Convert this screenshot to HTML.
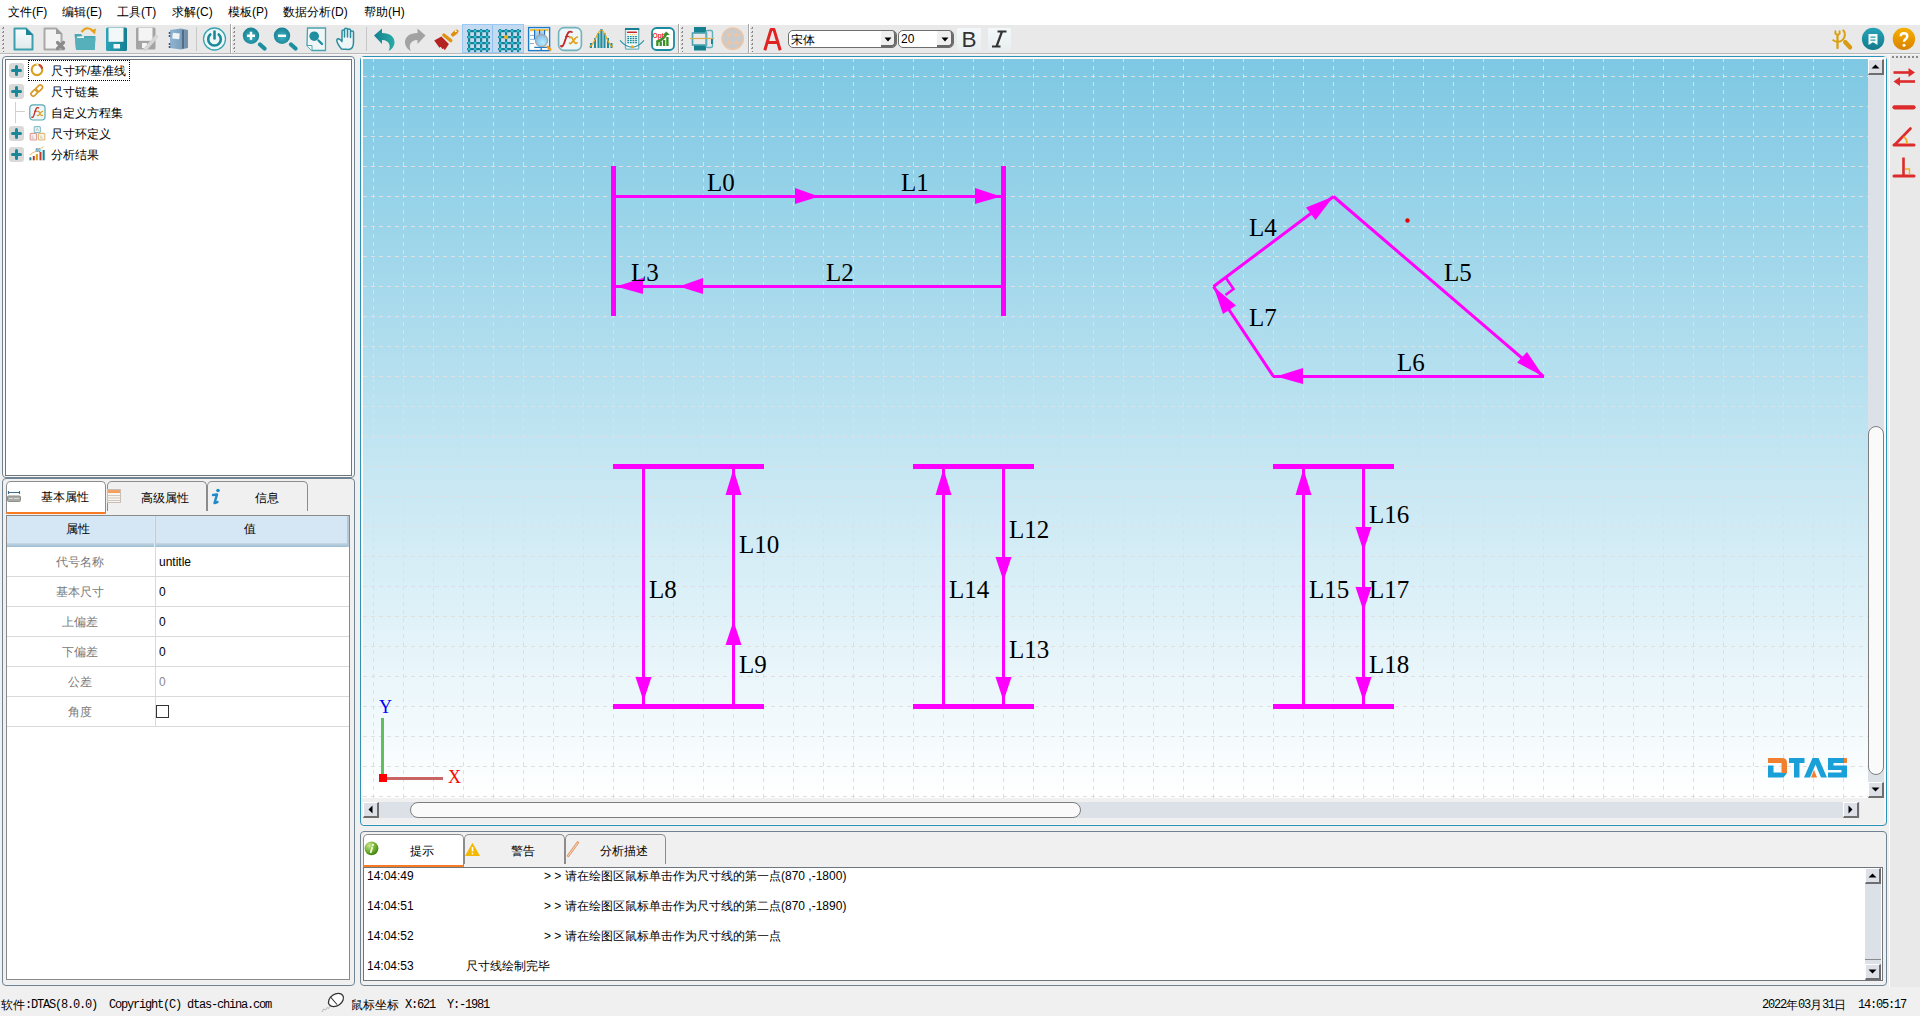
<!DOCTYPE html><html><head><meta charset="utf-8"><style>
html,body{margin:0;padding:0;}
body{width:1920px;height:1016px;position:relative;overflow:hidden;background:#f0f0f0;font-family:"Liberation Sans",sans-serif;font-size:12px;color:#000;}
div{position:absolute;box-sizing:border-box;}
.t{position:absolute;white-space:pre;line-height:14px;font-size:12px;}
.lbl{position:absolute;white-space:nowrap;font-family:"Liberation Serif",serif;font-size:25px;line-height:25px;color:#000;}
</style></head><body>

<div style="left:0px;top:0px;width:1920px;height:25px;background:#ffffff;"></div>
<span class="t" style="left:8px;top:5px;">文件(F)</span>
<span class="t" style="left:62px;top:5px;">编辑(E)</span>
<span class="t" style="left:117px;top:5px;">工具(T)</span>
<span class="t" style="left:172px;top:5px;">求解(C)</span>
<span class="t" style="left:228px;top:5px;">模板(P)</span>
<span class="t" style="left:283px;top:5px;">数据分析(D)</span>
<span class="t" style="left:364px;top:5px;">帮助(H)</span>
<div style="left:0px;top:25px;width:1920px;height:28px;background:#e9e9e9;"></div>
<div style="left:0px;top:53px;width:1920px;height:1px;background:#b9b9b9;"></div>
<div style="left:0px;top:54px;width:1920px;height:1px;background:#f7f7f7;"></div>
<div style="left:2px;top:56px;width:353px;height:422px;border:1px solid #6f8392;border-radius:4px;background:#f8f8f8;"></div>
<div style="left:5px;top:59px;width:347px;height:417px;border:1px solid #70767e;background:#ffffff;"></div>
<div style="left:2px;top:478px;width:353px;height:508px;border:1px solid #6f8392;border-radius:4px;background:#f0f0f0;"></div>
<div style="left:6px;top:515px;width:344px;height:465px;border:1px solid #8a8a8a;background:#ffffff;"></div>
<div style="left:360px;top:56px;width:1527px;height:770px;border:1px solid #2a93b9;border-radius:4px;background:#f0f0f0;"></div>
<div style="left:361px;top:57px;width:1525px;height:2px;background:#fdf8f5;"></div>
<div style="left:361px;top:57px;width:2px;height:741px;background:#fdf8f5;"></div>
<div style="left:1884px;top:57px;width:2px;height:765px;background:#fdf8f5;"></div>
<div style="left:363px;top:824px;width:1519px;height:1px;background:#fbf6f3;"></div>
<div style="left:363px;top:59px;width:1505px;height:739px;background:linear-gradient(to bottom,#7ec8e3 0%,#ffffff 100%);overflow:hidden;"></div>
<div style="left:1889px;top:55px;width:31px;height:932px;background:#e9e9e9;border-left:1px solid #ffffff;"></div>
<svg style="position:absolute;left:1890px;top:55px;" width="30" height="4" viewBox="0 0 30 4"><rect x="2" y="1" width="2" height="2" fill="#8a8a8a"/><rect x="6" y="1" width="2" height="2" fill="#8a8a8a"/><rect x="10" y="1" width="2" height="2" fill="#8a8a8a"/><rect x="14" y="1" width="2" height="2" fill="#8a8a8a"/><rect x="18" y="1" width="2" height="2" fill="#8a8a8a"/><rect x="22" y="1" width="2" height="2" fill="#8a8a8a"/><rect x="26" y="1" width="2" height="2" fill="#8a8a8a"/></svg>
<svg style="position:absolute;left:1890px;top:62px;" width="30" height="26" viewBox="0 0 30 26"><path d="M3.5 10.5 H20" stroke="#dd2a2a" stroke-width="2.6"/><path d="M18.5 6 L25 10.5 L18.5 15 Z" fill="#dd2a2a"/><path d="M9 19.5 H25" stroke="#dd2a2a" stroke-width="2.6"/><path d="M10 15 L3.5 19.5 L10 24 Z" fill="#dd2a2a"/></svg>
<svg style="position:absolute;left:1890px;top:100px;" width="30" height="14" viewBox="0 0 30 14"><path d="M4.5 7.3 H23.5" stroke="#dd2a2a" stroke-width="4.2" stroke-linecap="round"/></svg>
<svg style="position:absolute;left:1890px;top:125px;" width="30" height="24" viewBox="0 0 30 24"><path d="M4 20 H24" stroke="#dd2a2a" stroke-width="3" stroke-linecap="round"/><path d="M5 19.5 L20.5 3.5" stroke="#dd2a2a" stroke-width="2.6" stroke-linecap="round"/><path d="M13.5 12 Q17 13 17 19" fill="none" stroke="#f2a81e" stroke-width="1.8"/></svg>
<svg style="position:absolute;left:1890px;top:155px;" width="30" height="24" viewBox="0 0 30 24"><path d="M13.5 2.5 V20" stroke="#dd2a2a" stroke-width="2.6"/><path d="M4 21 H24" stroke="#dd2a2a" stroke-width="3" stroke-linecap="round"/><path d="M15 14 H19.5 V19.5" fill="none" stroke="#f2b01e" stroke-width="1.4"/></svg>
<div style="left:360px;top:831px;width:1527px;height:155px;border:1px solid #6f8392;border-radius:4px;background:#f0f0f0;"></div>
<div style="left:363px;top:867px;width:1520px;height:114px;border:1px solid #70767e;background:#ffffff;"></div>
<svg style="position:absolute;left:0;top:0" width="1920" height="1016" viewBox="0 0 1920 1016"><clipPath id="cc"><rect x="363" y="59" width="1505" height="739"/></clipPath><g clip-path="url(#cc)"><defs><pattern id="gv" x="0" y="0" width="30" height="8" patternUnits="userSpaceOnUse"><rect x="13" y="2" width="1" height="4" fill="#dfdfdf"/></pattern><pattern id="gh" x="0" y="0" width="8" height="30" patternUnits="userSpaceOnUse"><rect x="3" y="16" width="4" height="1" fill="#dfdfdf"/></pattern></defs><rect x="363" y="59" width="1505" height="739" fill="url(#gv)" shape-rendering="crispEdges"/><rect x="363" y="59" width="1505" height="739" fill="url(#gh)" shape-rendering="crispEdges"/><rect x="611" y="166" width="5" height="150" fill="#ff00ff" shape-rendering="crispEdges"/><rect x="1001" y="166" width="5" height="150" fill="#ff00ff" shape-rendering="crispEdges"/><rect x="615" y="195" width="386" height="3" fill="#ff00ff" shape-rendering="crispEdges"/><rect x="615" y="285" width="386" height="3" fill="#ff00ff" shape-rendering="crispEdges"/><polygon points="795,188 795,204 819,196.5" fill="#ff00ff"/><polygon points="975,188 975,204 1001,196.5" fill="#ff00ff"/><polygon points="703,278 703,294 679,286.5" fill="#ff00ff"/><polygon points="643,278 643,294 616,286.5" fill="#ff00ff"/><text x="707" y="191" font-family="Liberation Serif" font-size="25" fill="#000">L0</text><text x="901" y="191" font-family="Liberation Serif" font-size="25" fill="#000">L1</text><text x="631" y="281" font-family="Liberation Serif" font-size="25" fill="#000">L3</text><text x="826" y="281" font-family="Liberation Serif" font-size="25" fill="#000">L2</text><line x1="1213.5" y1="286.5" x2="1333.5" y2="196.5" stroke="#ff00ff" stroke-width="3"/><line x1="1333.5" y1="196.5" x2="1543.5" y2="376.5" stroke="#ff00ff" stroke-width="3"/><rect x="1273" y="375" width="271" height="3" fill="#ff00ff" shape-rendering="crispEdges"/><line x1="1273.5" y1="376.5" x2="1213.5" y2="286.5" stroke="#ff00ff" stroke-width="3"/><polygon points="1333.5,196.5 1306,207.5 1315.5,220" fill="#ff00ff"/><polygon points="1543.5,376.5 1517,362.5 1527,352" fill="#ff00ff"/><polygon points="1276,376.5 1303,368 1303,384" fill="#ff00ff"/><polygon points="1213.5,286.5 1223,314 1236,305.5" fill="#ff00ff"/><polyline points="1226,278 1233.5,289 1225.5,295" fill="none" stroke="#ff00ff" stroke-width="2.6"/><circle cx="1407.5" cy="220.5" r="2.2" fill="#e80000"/><text x="1249" y="236" font-family="Liberation Serif" font-size="25" fill="#000">L4</text><text x="1444" y="281" font-family="Liberation Serif" font-size="25" fill="#000">L5</text><text x="1249" y="326" font-family="Liberation Serif" font-size="25" fill="#000">L7</text><text x="1397" y="371" font-family="Liberation Serif" font-size="25" fill="#000">L6</text><rect x="613" y="464" width="151" height="5" fill="#ff00ff" shape-rendering="crispEdges"/><rect x="613" y="704" width="151" height="5" fill="#ff00ff" shape-rendering="crispEdges"/><rect x="642" y="469" width="3" height="235" fill="#ff00ff" shape-rendering="crispEdges"/><rect x="732" y="469" width="3" height="235" fill="#ff00ff" shape-rendering="crispEdges"/><rect x="913" y="464" width="121" height="5" fill="#ff00ff" shape-rendering="crispEdges"/><rect x="913" y="704" width="121" height="5" fill="#ff00ff" shape-rendering="crispEdges"/><rect x="942" y="469" width="3" height="235" fill="#ff00ff" shape-rendering="crispEdges"/><rect x="1002" y="469" width="3" height="235" fill="#ff00ff" shape-rendering="crispEdges"/><rect x="1273" y="464" width="121" height="5" fill="#ff00ff" shape-rendering="crispEdges"/><rect x="1273" y="704" width="121" height="5" fill="#ff00ff" shape-rendering="crispEdges"/><rect x="1302" y="469" width="3" height="235" fill="#ff00ff" shape-rendering="crispEdges"/><rect x="1362" y="469" width="3" height="235" fill="#ff00ff" shape-rendering="crispEdges"/><polygon points="635.5,677 651.5,677 643.5,701" fill="#ff00ff"/><polygon points="733.5,469 725.5,495 741.5,495" fill="#ff00ff"/><polygon points="733.5,621 725.5,645 741.5,645" fill="#ff00ff"/><polygon points="943.5,469 935.5,495 951.5,495" fill="#ff00ff"/><polygon points="995.5,557 1011.5,557 1003.5,581" fill="#ff00ff"/><polygon points="995.5,677 1011.5,677 1003.5,701" fill="#ff00ff"/><polygon points="1303.5,469 1295.5,495 1311.5,495" fill="#ff00ff"/><polygon points="1355.5,527 1371.5,527 1363.5,551" fill="#ff00ff"/><polygon points="1355.5,587 1371.5,587 1363.5,611" fill="#ff00ff"/><polygon points="1355.5,677 1371.5,677 1363.5,701" fill="#ff00ff"/><text x="649" y="598" font-family="Liberation Serif" font-size="25" fill="#000">L8</text><text x="739" y="553" font-family="Liberation Serif" font-size="25" fill="#000">L10</text><text x="739" y="673" font-family="Liberation Serif" font-size="25" fill="#000">L9</text><text x="1009" y="538" font-family="Liberation Serif" font-size="25" fill="#000">L12</text><text x="949" y="598" font-family="Liberation Serif" font-size="25" fill="#000">L14</text><text x="1009" y="658" font-family="Liberation Serif" font-size="25" fill="#000">L13</text><text x="1369" y="523" font-family="Liberation Serif" font-size="25" fill="#000">L16</text><text x="1309" y="598" font-family="Liberation Serif" font-size="25" fill="#000">L15</text><text x="1369" y="598" font-family="Liberation Serif" font-size="25" fill="#000">L17</text><text x="1369" y="673" font-family="Liberation Serif" font-size="25" fill="#000">L18</text><rect x="381" y="718" width="3" height="56" fill="#5fbf5f" shape-rendering="crispEdges"/><rect x="387" y="777" width="56" height="3" fill="#c86464" shape-rendering="crispEdges"/><rect x="379" y="774" width="8" height="8" fill="#ff0000" shape-rendering="crispEdges"/><text x="379" y="713" font-family="Liberation Serif" font-size="18" fill="#0000ff">Y</text><text x="448" y="783" font-family="Liberation Serif" font-size="18" fill="#ff0000">X</text></g></svg>
<div style="left:9px;top:63px;width:15px;height:15px;background:#d9d9d9;border-radius:3px;"></div>
<svg style="position:absolute;left:9px;top:63px;" width="15" height="15" viewBox="0 0 15 15"><path d="M7.5 3.5v8M3.5 7.5h8" stroke="#1a8799" stroke-width="3" stroke-linecap="round"/></svg>
<span class="t" style="left:51px;top:64px;">尺寸环/基准线</span>
<div style="left:9px;top:84px;width:15px;height:15px;background:#d9d9d9;border-radius:3px;"></div>
<svg style="position:absolute;left:9px;top:84px;" width="15" height="15" viewBox="0 0 15 15"><path d="M7.5 3.5v8M3.5 7.5h8" stroke="#1a8799" stroke-width="3" stroke-linecap="round"/></svg>
<span class="t" style="left:51px;top:85px;">尺寸链集</span>
<span class="t" style="left:51px;top:106px;">自定义方程集</span>
<div style="left:9px;top:126px;width:15px;height:15px;background:#d9d9d9;border-radius:3px;"></div>
<svg style="position:absolute;left:9px;top:126px;" width="15" height="15" viewBox="0 0 15 15"><path d="M7.5 3.5v8M3.5 7.5h8" stroke="#1a8799" stroke-width="3" stroke-linecap="round"/></svg>
<span class="t" style="left:51px;top:127px;">尺寸环定义</span>
<div style="left:9px;top:147px;width:15px;height:15px;background:#d9d9d9;border-radius:3px;"></div>
<svg style="position:absolute;left:9px;top:147px;" width="15" height="15" viewBox="0 0 15 15"><path d="M7.5 3.5v8M3.5 7.5h8" stroke="#1a8799" stroke-width="3" stroke-linecap="round"/></svg>
<span class="t" style="left:51px;top:148px;">分析结果</span>
<div style="left:15px;top:102px;width:1px;height:21px;background:#d4d0cc;"></div>
<div style="left:16px;top:111px;width:9px;height:1px;background:#d4d0cc;"></div>
<div style="left:28px;top:60px;width:102px;height:21px;border:1px dotted #000;"></div>
<svg style="position:absolute;left:29px;top:62px;" width="17" height="17" viewBox="0 0 17 17"><circle cx="8" cy="7.8" r="5.3" fill="none" stroke="#d9a020" stroke-width="2.1"/><path d="M9.8 2.8 A5.3 5.3 0 0 1 13.2 6.8" fill="none" stroke="#c8463a" stroke-width="2.1"/><path d="M7.6 1.8 L9.2 3.6" stroke="#fff" stroke-width="1.2"/></svg>
<svg style="position:absolute;left:29px;top:83px;" width="17" height="17" viewBox="0 0 17 17"><g fill="none" stroke="#d99a26" stroke-width="1.7"><rect x="1.6" y="7.6" width="7.6" height="4.4" rx="2.2" transform="rotate(-45 5.4 9.8)"/><rect x="6.3" y="3.2" width="7.6" height="4.4" rx="2.2" transform="rotate(-45 10.1 5.4)"/></g></svg>
<svg style="position:absolute;left:29px;top:104px;" width="17" height="17" viewBox="0 0 17 17"><rect x="0.8" y="0.8" width="15.2" height="15.2" rx="3.2" fill="#eef6f6" stroke="#5aa8b4" stroke-width="1.2"/><path d="M2.8 13.2 Q3.8 14 4.8 11.5 L6.8 5.4 Q7.7 3 9.6 3.9" fill="none" stroke="#c0302a" stroke-width="1.3" stroke-linecap="round"/><path d="M5.2 7.2 H8.3" stroke="#c0302a" stroke-width="0.9"/><path d="M8.6 7.6 Q9.5 6.8 10.2 8 L11.8 11 Q12.5 12 13.4 11.2 M13.6 7.3 Q13 7.2 11.5 9 L9.8 11.2 Q9.1 12 8.4 11.5" fill="none" stroke="#d9a020" stroke-width="1.2" stroke-linecap="round"/></svg>
<svg style="position:absolute;left:29px;top:125px;" width="17" height="17" viewBox="0 0 17 17"><rect x="5.2" y="1.6" width="6.2" height="6" rx="1" fill="#eaf5f6" stroke="#86c0ca" stroke-width="1.1"/><rect x="1.2" y="8.4" width="6.4" height="6.6" rx="1" fill="#fbeeee" stroke="#dc9a9a" stroke-width="1.1"/><rect x="9.4" y="8.4" width="6.4" height="6.6" rx="1" fill="#fbf3e6" stroke="#e0b878" stroke-width="1.1"/><path d="M7 6 L8.3 3.2 L9.6 6 M3.2 10.3 V13.2 H5 M11.8 10.5 V13.1 H13.6" fill="none" stroke="#b0b8b8" stroke-width="0.7"/></svg>
<svg style="position:absolute;left:29px;top:146px;" width="17" height="16" viewBox="0 0 17 16"><g><rect x="0.4" y="11.3" width="2" height="3" fill="#1a8799"/><rect x="3.8" y="10" width="2" height="4.3" fill="#c23a2e"/><rect x="6.9" y="8" width="2" height="6.3" fill="#d9a020"/><rect x="10.5" y="6" width="2" height="8.3" fill="#c23a2e"/><rect x="13.6" y="4" width="2.1" height="10.3" fill="#1a8799"/></g><path d="M0.8 9 Q4 6 7 5.4" stroke="#e8b450" stroke-width="0.9" fill="none"/><text x="6.5" y="6" font-family="Liberation Sans" font-weight="bold" font-size="4.5" fill="#1a8799">60</text><path d="M11.5 2.6 L14.5 0.8" stroke="#e8b450" stroke-width="0.9"/></svg>
<div style="left:6px;top:481px;width:100px;height:33px;background:#ffffff;border:1px solid #8c8c8c;border-bottom:none;border-radius:5px 5px 0 0;"></div>
<div style="left:6px;top:512px;width:100px;height:2px;background:#f97b21;border-radius:0 0 2px 2px;"></div>
<div style="left:107px;top:481px;width:100px;height:30px;border:1px solid #8c8c8c;border-bottom:none;border-radius:5px 5px 0 0;"></div>
<div style="left:207px;top:481px;width:101px;height:30px;border:1px solid #8c8c8c;border-bottom:none;border-radius:5px 5px 0 0;"></div>
<span class="t" style="left:41px;top:490px;">基本属性</span>
<span class="t" style="left:141px;top:491px;">高级属性</span>
<span class="t" style="left:255px;top:491px;">信息</span>
<svg style="position:absolute;left:7px;top:490px;" width="14" height="12" viewBox="0 0 14 12"><path d="M1.5 1v3M12.5 1v3M1.5 2.5h11" stroke="#3e6f8e" stroke-width="1.2" fill="none"/><rect x="0.5" y="6" width="13" height="5.5" rx="1" fill="#a9aca6" stroke="#8d908a"/><path d="M2 8.5h4M7 8.5h5" stroke="#d6d8d2" stroke-width="1"/></svg>
<svg style="position:absolute;left:107px;top:489px;" width="15" height="15" viewBox="0 0 15 15"><rect x="0.5" y="0.5" width="13" height="13" fill="#f8f4ee" stroke="#c8c0b8"/><rect x="1" y="1" width="12" height="3" fill="#f4a060"/><path d="M1 6.5h12M1 9h12M1 11.5h12" stroke="#d0c8c0" stroke-width="1"/></svg>
<svg style="position:absolute;left:210px;top:488px;" width="11" height="18" viewBox="0 0 11 18"><circle cx="8" cy="2.5" r="1.8" fill="#1f8ac9"/><path d="M3 7 L7 6.5 L4.5 15 L7.5 14" stroke="#1f8ac9" stroke-width="2.4" fill="none" stroke-linecap="round" stroke-linejoin="round"/></svg>
<div style="left:7px;top:516px;width:342px;height:28px;background:#d5e6f4;"></div>
<div style="left:7px;top:543px;width:342px;height:4px;background:linear-gradient(#c6d8e6,#9cbcd0);"></div>
<div style="left:154px;top:516px;width:2px;height:31px;background:linear-gradient(to right,#f4f8fb,#a8c0d0);"></div>
<div style="left:347px;top:516px;width:2px;height:31px;background:#b4c8d8;"></div>
<span class="t" style="left:66px;top:522px;">属性</span>
<span class="t" style="left:244px;top:522px;">值</span>
<div style="left:7px;top:576px;width:342px;height:1px;background:#d9d9d9;"></div>
<div style="left:155px;top:547px;width:1px;height:30px;background:#d9d9d9;"></div>
<span class="t" style="left:56px;top:555px;color:#7a7a7a;">代号名称</span>
<span class="t" style="left:159px;top:555px;color:#000;">untitle</span>
<div style="left:7px;top:606px;width:342px;height:1px;background:#d9d9d9;"></div>
<div style="left:155px;top:577px;width:1px;height:30px;background:#d9d9d9;"></div>
<span class="t" style="left:56px;top:585px;color:#7a7a7a;">基本尺寸</span>
<span class="t" style="left:159px;top:585px;color:#000;">0</span>
<div style="left:7px;top:636px;width:342px;height:1px;background:#d9d9d9;"></div>
<div style="left:155px;top:607px;width:1px;height:30px;background:#d9d9d9;"></div>
<span class="t" style="left:62px;top:615px;color:#7a7a7a;">上偏差</span>
<span class="t" style="left:159px;top:615px;color:#000;">0</span>
<div style="left:7px;top:666px;width:342px;height:1px;background:#d9d9d9;"></div>
<div style="left:155px;top:637px;width:1px;height:30px;background:#d9d9d9;"></div>
<span class="t" style="left:62px;top:645px;color:#7a7a7a;">下偏差</span>
<span class="t" style="left:159px;top:645px;color:#000;">0</span>
<div style="left:7px;top:696px;width:342px;height:1px;background:#d9d9d9;"></div>
<div style="left:155px;top:667px;width:1px;height:30px;background:#d9d9d9;"></div>
<span class="t" style="left:68px;top:675px;color:#7a7a7a;">公差</span>
<span class="t" style="left:159px;top:675px;color:#8a8a8a;">0</span>
<div style="left:7px;top:726px;width:342px;height:1px;background:#d9d9d9;"></div>
<div style="left:155px;top:697px;width:1px;height:30px;background:#d9d9d9;"></div>
<span class="t" style="left:68px;top:705px;color:#7a7a7a;">角度</span>
<div style="left:156px;top:705px;width:13px;height:13px;border:1px solid #333;background:#fff;"></div>
<div style="left:363px;top:834px;width:101px;height:33px;background:#ffffff;border:1px solid #8c8c8c;border-bottom:none;border-radius:5px 5px 0 0;"></div>
<div style="left:363px;top:865px;width:101px;height:2px;background:#f97b21;border-radius:0 0 2px 2px;"></div>
<div style="left:464px;top:834px;width:101px;height:30px;border:1px solid #8c8c8c;border-bottom:none;border-radius:5px 5px 0 0;"></div>
<div style="left:565px;top:834px;width:101px;height:30px;border:1px solid #8c8c8c;border-bottom:none;border-radius:5px 5px 0 0;"></div>
<span class="t" style="left:410px;top:844px;">提示</span>
<span class="t" style="left:511px;top:844px;">警告</span>
<span class="t" style="left:600px;top:844px;">分析描述</span>
<svg style="position:absolute;left:364px;top:841px;" width="16" height="16" viewBox="0 0 16 16"><defs><radialGradient id="gi" cx="0.35" cy="0.3" r="0.75"><stop offset="0" stop-color="#c8e890"/><stop offset="0.6" stop-color="#6fae2a"/><stop offset="1" stop-color="#3f7e14"/></radialGradient></defs><circle cx="7.5" cy="7.3" r="6.9" fill="url(#gi)"/><path d="M8.2 6.5 L6.8 11.2" stroke="#f0f8e0" stroke-width="1.8" stroke-linecap="round"/><circle cx="8.9" cy="3.9" r="1.1" fill="#f0f8e0"/></svg>
<svg style="position:absolute;left:465px;top:842px;" width="16" height="15" viewBox="0 0 16 15"><path d="M7.5 0.8 L15 14 L0 14 Z" fill="#f5b800"/><path d="M7.5 5v4.5" stroke="#fff" stroke-width="1.6"/><circle cx="7.5" cy="11.6" r="0.9" fill="#fff"/></svg>
<svg style="position:absolute;left:566px;top:841px;" width="14" height="18" viewBox="0 0 14 18"><path d="M11.8 1.5 L2.2 14.8" stroke="#e3935c" stroke-width="2.6" stroke-linecap="round"/><path d="M11.8 1.5 L2.2 14.8" stroke="#fbe8d8" stroke-width="0.9"/></svg>
<span class="t" style="left:367px;top:869px;">14:04:49</span>
<span class="t" style="left:544px;top:869px;letter-spacing:0px;">&gt; &gt;</span>
<span class="t" style="left:565px;top:869px;">请在绘图区鼠标单击作为尺寸线的第一点(870 ,-1800)</span>
<span class="t" style="left:367px;top:899px;">14:04:51</span>
<span class="t" style="left:544px;top:899px;letter-spacing:0px;">&gt; &gt;</span>
<span class="t" style="left:565px;top:899px;">请在绘图区鼠标单击作为尺寸线的第二点(870 ,-1890)</span>
<span class="t" style="left:367px;top:929px;">14:04:52</span>
<span class="t" style="left:544px;top:929px;letter-spacing:0px;">&gt; &gt;</span>
<span class="t" style="left:565px;top:929px;">请在绘图区鼠标单击作为尺寸线的第一点</span>
<span class="t" style="left:367px;top:959px;">14:04:53</span>
<span class="t" style="left:466px;top:959px;">尺寸线绘制完毕</span>
<span class="t" style="left:1px;top:998px;font-size:12px;">软件</span>
<span class="t" style="left:25px;top:998px;font-family:'Liberation Mono',monospace;letter-spacing:-1.2px;">:DTAS(8.0.0)  Copyright(C) dtas-china.com</span>
<span class="t" style="left:351px;top:998px;">鼠标坐标</span>
<span class="t" style="left:405px;top:998px;font-family:'Liberation Mono',monospace;letter-spacing:-1.2px;">X:621  Y:-1981</span>
<span class="t" style="left:1786px;top:998px;">年</span>
<span class="t" style="left:1810px;top:998px;">月</span>
<span class="t" style="left:1834px;top:998px;">日</span>
<span class="t" style="left:1762px;top:998px;font-family:'Liberation Mono',monospace;letter-spacing:-1.2px;">2022</span>
<span class="t" style="left:1798px;top:998px;font-family:'Liberation Mono',monospace;letter-spacing:-1.2px;">03</span>
<span class="t" style="left:1822px;top:998px;font-family:'Liberation Mono',monospace;letter-spacing:-1.2px;">31</span>
<span class="t" style="left:1858px;top:998px;font-family:'Liberation Mono',monospace;letter-spacing:-1.2px;">14:05:17</span>
<svg style="position:absolute;left:320px;top:990px;" width="28" height="26" viewBox="0 0 28 26"><ellipse cx="16" cy="10" rx="8.2" ry="5.8" transform="rotate(-35 16 10)" fill="#fff" stroke="#333" stroke-width="1.3"/><path d="M10.5 7 L17 14.5" fill="none" stroke="#333" stroke-width="1.1"/><path d="M10 16 l-1.5 2.5 l-1.5 -1 l-1.5 2.5 l-2 -1 l-1.5 3" fill="none" stroke="#aaa" stroke-width="0.8"/></svg>
<svg style="position:absolute;left:2px;top:27px;" width="3" height="25" viewBox="0 0 3 25"><rect x="1" y="0" width="1" height="1" fill="#7a7a7a"/><rect x="0" y="1" width="2" height="1" fill="#9a9a9a"/><rect x="1" y="4" width="1" height="1" fill="#7a7a7a"/><rect x="0" y="5" width="2" height="1" fill="#9a9a9a"/><rect x="1" y="8" width="1" height="1" fill="#7a7a7a"/><rect x="0" y="9" width="2" height="1" fill="#9a9a9a"/><rect x="1" y="12" width="1" height="1" fill="#7a7a7a"/><rect x="0" y="13" width="2" height="1" fill="#9a9a9a"/><rect x="1" y="16" width="1" height="1" fill="#7a7a7a"/><rect x="0" y="17" width="2" height="1" fill="#9a9a9a"/><rect x="1" y="20" width="1" height="1" fill="#7a7a7a"/><rect x="0" y="21" width="2" height="1" fill="#9a9a9a"/><rect x="1" y="24" width="1" height="1" fill="#7a7a7a"/><rect x="0" y="25" width="2" height="1" fill="#9a9a9a"/></svg>
<svg style="position:absolute;left:233px;top:27px;" width="3" height="25" viewBox="0 0 3 25"><rect x="1" y="0" width="1" height="1" fill="#7a7a7a"/><rect x="0" y="1" width="2" height="1" fill="#9a9a9a"/><rect x="1" y="4" width="1" height="1" fill="#7a7a7a"/><rect x="0" y="5" width="2" height="1" fill="#9a9a9a"/><rect x="1" y="8" width="1" height="1" fill="#7a7a7a"/><rect x="0" y="9" width="2" height="1" fill="#9a9a9a"/><rect x="1" y="12" width="1" height="1" fill="#7a7a7a"/><rect x="0" y="13" width="2" height="1" fill="#9a9a9a"/><rect x="1" y="16" width="1" height="1" fill="#7a7a7a"/><rect x="0" y="17" width="2" height="1" fill="#9a9a9a"/><rect x="1" y="20" width="1" height="1" fill="#7a7a7a"/><rect x="0" y="21" width="2" height="1" fill="#9a9a9a"/><rect x="1" y="24" width="1" height="1" fill="#7a7a7a"/><rect x="0" y="25" width="2" height="1" fill="#9a9a9a"/></svg>
<svg style="position:absolute;left:681px;top:27px;" width="3" height="25" viewBox="0 0 3 25"><rect x="1" y="0" width="1" height="1" fill="#7a7a7a"/><rect x="0" y="1" width="2" height="1" fill="#9a9a9a"/><rect x="1" y="4" width="1" height="1" fill="#7a7a7a"/><rect x="0" y="5" width="2" height="1" fill="#9a9a9a"/><rect x="1" y="8" width="1" height="1" fill="#7a7a7a"/><rect x="0" y="9" width="2" height="1" fill="#9a9a9a"/><rect x="1" y="12" width="1" height="1" fill="#7a7a7a"/><rect x="0" y="13" width="2" height="1" fill="#9a9a9a"/><rect x="1" y="16" width="1" height="1" fill="#7a7a7a"/><rect x="0" y="17" width="2" height="1" fill="#9a9a9a"/><rect x="1" y="20" width="1" height="1" fill="#7a7a7a"/><rect x="0" y="21" width="2" height="1" fill="#9a9a9a"/><rect x="1" y="24" width="1" height="1" fill="#7a7a7a"/><rect x="0" y="25" width="2" height="1" fill="#9a9a9a"/></svg>
<svg style="position:absolute;left:751px;top:27px;" width="3" height="25" viewBox="0 0 3 25"><rect x="1" y="0" width="1" height="1" fill="#7a7a7a"/><rect x="0" y="1" width="2" height="1" fill="#9a9a9a"/><rect x="1" y="4" width="1" height="1" fill="#7a7a7a"/><rect x="0" y="5" width="2" height="1" fill="#9a9a9a"/><rect x="1" y="8" width="1" height="1" fill="#7a7a7a"/><rect x="0" y="9" width="2" height="1" fill="#9a9a9a"/><rect x="1" y="12" width="1" height="1" fill="#7a7a7a"/><rect x="0" y="13" width="2" height="1" fill="#9a9a9a"/><rect x="1" y="16" width="1" height="1" fill="#7a7a7a"/><rect x="0" y="17" width="2" height="1" fill="#9a9a9a"/><rect x="1" y="20" width="1" height="1" fill="#7a7a7a"/><rect x="0" y="21" width="2" height="1" fill="#9a9a9a"/><rect x="1" y="24" width="1" height="1" fill="#7a7a7a"/><rect x="0" y="25" width="2" height="1" fill="#9a9a9a"/></svg>
<div style="left:230px;top:24px;width:1px;height:29px;background:#a8a8a8;"></div>
<div style="left:231px;top:24px;width:1px;height:29px;background:#ffffff;"></div>
<div style="left:678px;top:24px;width:1px;height:29px;background:#a8a8a8;"></div>
<div style="left:679px;top:24px;width:1px;height:29px;background:#ffffff;"></div>
<div style="left:748px;top:24px;width:1px;height:29px;background:#a8a8a8;"></div>
<div style="left:749px;top:24px;width:1px;height:29px;background:#ffffff;"></div>
<div style="left:196px;top:27px;width:1px;height:24px;background:#c8c8c8;"></div>
<div style="left:366px;top:27px;width:1px;height:24px;background:#c8c8c8;"></div>
<svg style="position:absolute;left:13px;top:27px;" width="21" height="25" viewBox="0 0 21 25"><defs><linearGradient id="pg" x1="0" y1="0" x2="0" y2="1"><stop offset="0" stop-color="#fafdfd"/><stop offset="1" stop-color="#dde9ec"/></linearGradient></defs><path d="M1.5 1.5 H13 L19.5 8 V22.5 H1.5 Z" fill="url(#pg)" stroke="#3c9fae" stroke-width="2" stroke-linejoin="round"/><path d="M13 1 V8 H20 Z" fill="#1c8496"/></svg>
<svg style="position:absolute;left:43px;top:27px;" width="23" height="25" viewBox="0 0 23 25"><path d="M1.5 1.5 H13 L18.5 7 V22.5 H1.5 Z" fill="#f3f3f3" stroke="#a9a9a9" stroke-width="2" stroke-linejoin="round"/><path d="M13 1 V7 H19 Z" fill="#9a9a9a"/><path d="M14.5 15.5 L20.5 21.5 M20.5 15.5 L14.5 21.5" stroke="#8a8a8a" stroke-width="3.2" stroke-linecap="round"/></svg>
<svg style="position:absolute;left:73px;top:26px;" width="25" height="26" viewBox="0 0 25 26"><path d="M1.5 8 H8 L9.5 10 H22.5 L21.5 23.5 H3 Z" fill="#4aa8b4"/><rect x="4" y="10.5" width="7" height="3" fill="#f4f4f0" transform="rotate(-6 7 12)"/><path d="M2 12 H22.5 L21.8 24 H3 Z" fill="#55b0bb"/><path d="M8.5 6 Q14 -1 20 5" fill="none" stroke="#e6a21a" stroke-width="2.2"/><path d="M17.5 4.5 L23 2.5 L22 8.5 Z" fill="#e6a21a"/></svg>
<svg style="position:absolute;left:105px;top:27px;" width="23" height="25" viewBox="0 0 23 25"><defs><linearGradient id="sg" x1="0" x2="1"><stop offset="0" stop-color="#2aa3b8"/><stop offset="1" stop-color="#167f91"/></linearGradient></defs><rect x="1" y="0.5" width="21" height="23.5" rx="1.5" fill="url(#sg)"/><rect x="3.5" y="0.8" width="15" height="14" fill="#f2f7f8"/><rect x="8.5" y="17" width="6.5" height="4.5" fill="#f0f4f4"/></svg>
<svg style="position:absolute;left:135px;top:27px;" width="24" height="24" viewBox="0 0 24 24"><rect x="1" y="0.5" width="19.5" height="22" rx="1.5" fill="#a4a4a4"/><rect x="3.5" y="0.8" width="14" height="13" fill="#f4f4f4"/><rect x="7" y="16" width="5" height="5" fill="#f4f4f4"/><path d="M10 22.5 L21.5 9.5" stroke="#d6d6d6" stroke-width="3.5" stroke-linecap="round"/></svg>
<svg style="position:absolute;left:167px;top:27px;" width="23" height="24" viewBox="0 0 23 24"><defs><linearGradient id="bk" x1="0" x2="1"><stop offset="0" stop-color="#8fb4d2"/><stop offset="1" stop-color="#6f93b2"/></linearGradient></defs><path d="M3 3 L14 1.5 L21 3 V21 L14 22.5 L3 21 Z" fill="url(#bk)"/><rect x="15" y="3" width="2" height="18.5" fill="#556b80"/><rect x="18" y="3.5" width="1.5" height="17.5" fill="#7b8c9c"/><rect x="5.5" y="6" width="7" height="6" fill="#eef4f8" transform="rotate(6 9 9)"/><circle cx="2.5" cy="6" r="0.9" fill="#445"/><circle cx="2.5" cy="9" r="0.9" fill="#445"/><circle cx="2.5" cy="17" r="0.9" fill="#445"/><circle cx="2.5" cy="20" r="0.9" fill="#445"/></svg>
<svg style="position:absolute;left:202px;top:27px;" width="25" height="25" viewBox="0 0 25 25"><circle cx="12.5" cy="12" r="11" fill="#eef7f8" stroke="#3aa3b3" stroke-width="1.3"/><path d="M8.3 7.5 A6.3 6.3 0 1 0 16.7 7.5" fill="none" stroke="#1a8a9a" stroke-width="2.6" stroke-linecap="round"/><path d="M12.5 4.5 V11.5" stroke="#1a8a9a" stroke-width="2.6" stroke-linecap="round"/></svg>
<svg style="position:absolute;left:242px;top:27px;" width="26" height="24" viewBox="0 0 26 24"><defs><radialGradient id="zg242" cx="0.5" cy="0.55" r="0.6"><stop offset="0" stop-color="#3fb3c4"/><stop offset="1" stop-color="#137c8d"/></radialGradient></defs><circle cx="9" cy="8.8" r="8.2" fill="url(#zg242")"/><path d="M18 17.5 L22.5 21.5" stroke="#1d8fa0" stroke-width="4.2" stroke-linecap="round"/><g transform="translate(9 8.8)"><path d="M-4 0 H4 M0 -4 V4" stroke="#fff" stroke-width="2.4"/></g></svg>
<svg style="position:absolute;left:273px;top:27px;" width="26" height="24" viewBox="0 0 26 24"><defs><radialGradient id="zg273" cx="0.5" cy="0.55" r="0.6"><stop offset="0" stop-color="#3fb3c4"/><stop offset="1" stop-color="#137c8d"/></radialGradient></defs><circle cx="9" cy="8.8" r="8.2" fill="url(#zg273")"/><path d="M18 17.5 L22.5 21.5" stroke="#1d8fa0" stroke-width="4.2" stroke-linecap="round"/><g transform="translate(9 8.8)"><path d="M-4 0 H4" stroke="#fff" stroke-width="2.4"/></g></svg>
<svg style="position:absolute;left:306px;top:27px;" width="21" height="25" viewBox="0 0 21 25"><path d="M1.5 1 H19.5 V23.5 H6 L1 18.5 Z" fill="#f0f6f6" stroke="#4aa3b0" stroke-width="1.3"/><path d="M1 18.5 H6 V23.5" fill="#fff" stroke="#4aa3b0" stroke-width="1"/><circle cx="8.2" cy="9.2" r="4.8" fill="#1f8fa0"/><path d="M12.5 13.5 L16 17" stroke="#1f8fa0" stroke-width="2.4" stroke-linecap="round"/></svg>
<svg style="position:absolute;left:335px;top:27px;" width="24" height="24" viewBox="0 0 24 24"><path d="M6.5 22 C4 19 1 15 2 12.5 C3 11 5 12 7 14.5 V4 C7 2.5 9.5 2.5 9.5 4 V10 V2.5 C9.5 0.8 12.5 0.8 12.5 2.5 V10 V3 C12.5 1.5 15.5 1.5 15.5 3 V10.5 V5 C15.5 3.5 18.5 3.5 18.5 5 V15 C18.5 19 17 22 14 22.5 Z" fill="#eef5f6" stroke="#2a8c9c" stroke-width="1.5" stroke-linejoin="round"/></svg>
<svg style="position:absolute;left:373px;top:27px;" width="24" height="25" viewBox="0 0 24 25"><defs><linearGradient id="ug" x1="0" x2="1"><stop offset="0" stop-color="#13808f"/><stop offset="1" stop-color="#2aaaa5"/></linearGradient></defs><path d="M1 8.5 L9 1.5 V6 C17 6 22 10 21.5 16 C21 20 18 23 15.5 24 C18 20 17 13 9 13 V17 Z" fill="url(#ug)"/></svg>
<svg style="position:absolute;left:404px;top:27px;" width="23" height="25" viewBox="0 0 23 25"><path d="M21.5 8.5 L13.5 1.5 V6 C5.5 6 0.5 10 1 16 C1.5 20 4.5 23 7 24 C4.5 20 5.5 13 13.5 13 V17 Z" fill="#a2a2a2"/></svg>
<svg style="position:absolute;left:433px;top:26px;" width="26" height="26" viewBox="0 0 26 26"><path d="M17.6 8.6 L21 5 Q23.5 2.5 25 4 Q26.5 5.8 23.5 8.2 L19.8 11 Z" fill="#dc8e0c"/><circle cx="22.8" cy="5.2" r="1" fill="#fff"/><path d="M10.8 9 L17.8 14.6" stroke="#de9210" stroke-width="3.3" stroke-linecap="round"/><path d="M1.2 14.6 L8.4 10.6 L15.9 18 L11.8 24.2 L10.3 22.2 L9.5 23.3 L7.7 20.8 L6.5 21.8 Z" fill="#b42222"/></svg>
<div style="left:462px;top:24px;width:62px;height:29px;background:#c4daf0;border:1px solid #99c9f5;"></div>
<div style="left:492px;top:25px;width:1px;height:27px;background:#8fc0f0;"></div>
<svg style="position:absolute;left:466px;top:28px;" width="25" height="25" viewBox="0 0 25 25"><rect x="2" y="1" width="2.2" height="23" fill="#197f8f"/><rect x="1" y="2" width="23" height="2.2" fill="#197f8f"/><rect x="8" y="1" width="2.2" height="23" fill="#197f8f"/><rect x="1" y="8" width="23" height="2.2" fill="#197f8f"/><rect x="14" y="1" width="2.2" height="23" fill="#197f8f"/><rect x="1" y="14" width="23" height="2.2" fill="#197f8f"/><rect x="20" y="1" width="2.2" height="23" fill="#197f8f"/><rect x="1" y="20" width="23" height="2.2" fill="#197f8f"/><circle cx="3.1" cy="3.1" r="1.45" fill="#2cc0da"/><circle cx="3.1" cy="9.1" r="1.45" fill="#2cc0da"/><circle cx="3.1" cy="15.1" r="1.45" fill="#2cc0da"/><circle cx="3.1" cy="21.1" r="1.45" fill="#2cc0da"/><circle cx="9.1" cy="3.1" r="1.45" fill="#2cc0da"/><circle cx="9.1" cy="9.1" r="1.45" fill="#2cc0da"/><circle cx="9.1" cy="15.1" r="1.45" fill="#2cc0da"/><circle cx="9.1" cy="21.1" r="1.45" fill="#2cc0da"/><circle cx="15.1" cy="3.1" r="1.45" fill="#2cc0da"/><circle cx="15.1" cy="9.1" r="1.45" fill="#2cc0da"/><circle cx="15.1" cy="15.1" r="1.45" fill="#2cc0da"/><circle cx="15.1" cy="21.1" r="1.45" fill="#2cc0da"/><circle cx="21.1" cy="3.1" r="1.45" fill="#2cc0da"/><circle cx="21.1" cy="9.1" r="1.45" fill="#2cc0da"/><circle cx="21.1" cy="15.1" r="1.45" fill="#2cc0da"/><circle cx="21.1" cy="21.1" r="1.45" fill="#2cc0da"/></svg>
<svg style="position:absolute;left:497px;top:28px;" width="25" height="25" viewBox="0 0 25 25"><rect x="2" y="1" width="2.2" height="23" fill="#197f8f"/><rect x="1" y="2" width="23" height="2.2" fill="#197f8f"/><rect x="8" y="1" width="2.2" height="23" fill="#197f8f"/><rect x="1" y="8" width="23" height="2.2" fill="#197f8f"/><rect x="14" y="1" width="2.2" height="23" fill="#197f8f"/><rect x="1" y="14" width="23" height="2.2" fill="#197f8f"/><rect x="20" y="1" width="2.2" height="23" fill="#197f8f"/><rect x="1" y="20" width="23" height="2.2" fill="#197f8f"/><circle cx="3.1" cy="3.1" r="1.45" fill="#2cc0da"/><circle cx="3.1" cy="9.1" r="1.45" fill="#2cc0da"/><circle cx="3.1" cy="15.1" r="1.45" fill="#2cc0da"/><circle cx="3.1" cy="21.1" r="1.45" fill="#2cc0da"/><circle cx="9.1" cy="3.1" r="1.45" fill="#2cc0da"/><circle cx="9.1" cy="9.1" r="1.45" fill="#2cc0da"/><circle cx="9.1" cy="15.1" r="1.45" fill="#2cc0da"/><circle cx="9.1" cy="21.1" r="1.45" fill="#2cc0da"/><circle cx="15.1" cy="3.1" r="1.45" fill="#2cc0da"/><circle cx="15.1" cy="9.1" r="1.45" fill="#2cc0da"/><circle cx="15.1" cy="15.1" r="1.45" fill="#2cc0da"/><circle cx="15.1" cy="21.1" r="1.45" fill="#2cc0da"/><circle cx="21.1" cy="3.1" r="1.45" fill="#2cc0da"/><circle cx="21.1" cy="9.1" r="1.45" fill="#2cc0da"/><circle cx="21.1" cy="15.1" r="1.45" fill="#2cc0da"/><circle cx="21.1" cy="21.1" r="1.45" fill="#2cc0da"/><circle cx="9.1" cy="9.1" r="2.1" fill="#f2b01e"/></svg>
<svg style="position:absolute;left:527px;top:26px;" width="25" height="26" viewBox="0 0 25 26"><defs><radialGradient id="mgl" cx="0.6" cy="0.65" r="0.7"><stop offset="0" stop-color="#b4ecff"/><stop offset="1" stop-color="#7ab8ea"/></radialGradient></defs><rect x="1.6" y="1.6" width="21" height="23" fill="#fff" stroke="#1a7cc8" stroke-width="1.4"/><rect x="3" y="3" width="18.5" height="2.2" fill="#f5c040"/><rect x="7.6" y="5.2" width="10" height="8.5" fill="#a9cff2"/><path d="M7.6 4 V13.5 M12.6 4 V9 M17.6 4 V10.5" stroke="#1a6cc0" stroke-width="1.1"/><path d="M3 9.4 H7 M3 13.3 H7 M3 17.5 H7" stroke="#8fb0d0" stroke-width="1"/><path d="M7.3 21.3 H22 M14.2 21.3 V24.5" stroke="#1a7cc8" stroke-width="1.3"/><circle cx="14.5" cy="14.6" r="6.1" fill="url(#mgl)" stroke="#a6a6a6" stroke-width="1.3"/><path d="M20.8 20.8 L23.2 23.6" stroke="#f29a1a" stroke-width="2.6" stroke-linecap="round"/></svg>
<svg style="position:absolute;left:557px;top:26px;" width="26" height="26" viewBox="0 0 26 26"><rect x="1.6" y="1.6" width="22.8" height="22.8" rx="5.5" fill="#eef6f7" stroke="#72b2be" stroke-width="1.6"/><path d="M4 20 Q5.5 21.5 7.2 17 L10.2 8.5 Q11.8 4.5 14.8 6" fill="none" stroke="#c0282a" stroke-width="1.9" stroke-linecap="round"/><path d="M8.2 10.5 H12.5" stroke="#c0282a" stroke-width="1.3"/><path d="M12.8 11.6 Q14.2 10.4 15.2 12.2 L17.6 16.6 Q18.6 18 20 16.8 M20.4 11 Q19.4 10.8 17.2 13.6 L14.6 16.8 Q13.6 18 12.6 17.2" fill="none" stroke="#e0a018" stroke-width="1.7" stroke-linecap="round"/></svg>
<svg style="position:absolute;left:588px;top:28px;" width="26" height="21" viewBox="0 0 26 21"><rect x="2" y="15" width="2" height="5" fill="#1f8d9e"/><rect x="6" y="10" width="2" height="10" fill="#1f8d9e"/><rect x="9.5" y="5" width="2" height="15" fill="#1f8d9e"/><rect x="12.3" y="1" width="2.2" height="19" fill="#1f8d9e"/><rect x="15.5" y="5" width="2" height="15" fill="#1f8d9e"/><rect x="19" y="10" width="2" height="10" fill="#1f8d9e"/><rect x="22.5" y="15" width="2" height="5" fill="#1f8d9e"/><path d="M1 19 C7 18 9 2 13.3 2 C17.5 2 19.5 18 25 19" fill="none" stroke="#e6a620" stroke-width="1.2"/></svg>
<svg style="position:absolute;left:619px;top:27px;" width="26" height="24" viewBox="0 0 26 24"><rect x="6.5" y="1.6" width="13.2" height="20.6" rx="1" fill="#f4fafb" stroke="#72b2be" stroke-width="1.3"/><rect x="6" y="1" width="14.3" height="2" fill="#17808f"/><rect x="8" y="4.6" width="10" height="1.5" rx="0.7" fill="#c82828"/><path d="M8.5 7.6 H18" stroke="#f0c050" stroke-width="0.9" stroke-dasharray="1 1.2"/><g fill="#1a8a9a"><rect x="8.3" y="9" width="1.8" height="1.3"/><rect x="8.3" y="11" width="1.8" height="1.3"/><rect x="8.3" y="13" width="1.8" height="1.3"/><rect x="8.3" y="15" width="1.8" height="1.3"/><rect x="10.9" y="9" width="1.8" height="1.3"/><rect x="10.9" y="11" width="1.8" height="1.3"/><rect x="10.9" y="13" width="1.8" height="1.3"/><rect x="10.9" y="15" width="1.8" height="1.3"/><rect x="13.5" y="9" width="1.8" height="1.3"/><rect x="13.5" y="11" width="1.8" height="1.3"/><rect x="13.5" y="13" width="1.8" height="1.3"/><rect x="13.5" y="15" width="1.8" height="1.3"/><rect x="16.1" y="9" width="1.8" height="1.3"/><rect x="16.1" y="11" width="1.8" height="1.3"/><rect x="16.1" y="13" width="1.8" height="1.3"/><rect x="16.1" y="15" width="1.8" height="1.3"/></g><path d="M1 13.3 Q13 27 25 13.3" fill="none" stroke="#2a92a4" stroke-width="1.1"/><circle cx="13.2" cy="19.8" r="1.5" fill="#f0a818"/></svg>
<svg style="position:absolute;left:650px;top:26px;" width="26" height="26" viewBox="0 0 26 26"><rect x="2" y="2" width="22" height="22" rx="4.5" fill="#fff" stroke="#1a8aa0" stroke-width="1.8"/><g fill="#3c9028"><rect x="6.2" y="16.5" width="2.3" height="3.5"/><rect x="9.6" y="15.5" width="2.3" height="4.5"/><rect x="13" y="14" width="2.3" height="6"/><rect x="16.2" y="11" width="2.4" height="9"/></g><path d="M6.3 16 Q13 14 16.3 8" fill="none" stroke="#3c9028" stroke-width="2.6"/><path d="M16.3 5.6 L13 9 L19.8 9 Z" fill="#3c9028"/><text x="2.6" y="12.4" font-family="Liberation Sans" font-weight="bold" font-size="6.8" fill="#e83030" letter-spacing="-0.3">Opt</text></svg>
<svg style="position:absolute;left:689px;top:27px;" width="26" height="24" viewBox="0 0 26 24"><rect x="5" y="0" width="12" height="6" fill="#17808f"/><rect x="5" y="18" width="12" height="5.5" fill="#17808f"/><rect x="3.5" y="6" width="14" height="12" fill="none" stroke="#4ea3b1" stroke-width="1.6"/><rect x="17" y="3.5" width="6.5" height="17" rx="1.5" fill="none" stroke="#5fb0bc" stroke-width="1.4"/><rect x="22" y="12" width="1.8" height="5" fill="#17808f"/><path d="M1 11.5 H25" stroke="#d8b050" stroke-width="1.2"/></svg>
<svg style="position:absolute;left:720px;top:27px;" width="26" height="25" viewBox="0 0 26 25"><circle cx="12.7" cy="11.6" r="10.8" fill="#cbcbcb" stroke="#f0c6a4" stroke-width="1.3"/><g fill="#f4c4a0"><circle cx="9" cy="8" r="2.1"/><circle cx="16.5" cy="8" r="2.1"/><circle cx="9" cy="16" r="2.1"/><circle cx="16.5" cy="16" r="2.1"/></g></svg>
<svg style="position:absolute;left:760px;top:26px;" width="24" height="26" viewBox="0 0 24 26"><path d="M4.8 24.2 L11 3.6 H14 L20.2 24.2 M7.6 16.5 H17.4" fill="none" stroke="#e02424" stroke-width="3" stroke-linejoin="round"/></svg>
<div style="left:788px;top:30px;width:109px;height:18px;background:#fff;border:1px solid #6e6e6e;border-radius:5px;"></div>
<div style="left:881px;top:31px;width:15px;height:16px;background:#efefef;border-right:2px solid #6a6a6a;border-bottom:2px solid #6a6a6a;border-radius:0 4px 4px 0;"></div>
<svg style="position:absolute;left:884px;top:37px;" width="8" height="5" viewBox="0 0 8 5"><path d="M0.5 0.5 H7.5 L4 4.5 Z" fill="#000"/></svg>
<span class="t" style="left:791px;top:33px;font-size:12px;">宋体</span>
<div style="left:898px;top:30px;width:56px;height:18px;background:#fff;border:1px solid #6e6e6e;border-radius:5px;"></div>
<div style="left:937px;top:31px;width:16px;height:16px;background:#efefef;border-right:2px solid #6a6a6a;border-bottom:2px solid #6a6a6a;border-radius:0 4px 4px 0;"></div>
<svg style="position:absolute;left:941px;top:37px;" width="8" height="5" viewBox="0 0 8 5"><path d="M0.5 0.5 H7.5 L4 4.5 Z" fill="#000"/></svg>
<span class="t" style="left:901px;top:32px;font-size:12px;">20</span>
<div style="left:957px;top:28px;width:24px;height:23px;background:linear-gradient(#f4f8fa,#e8eef0);"></div>
<div style="left:988px;top:28px;width:23px;height:23px;background:linear-gradient(#f4f8fa,#e8eef0);"></div>
<svg style="position:absolute;left:957px;top:28px;" width="24" height="23" viewBox="0 0 24 23"><text x="4.6" y="18.6" font-family="Liberation Sans" font-size="22.5" fill="#333">B</text></svg>
<svg style="position:absolute;left:988px;top:28px;" width="23" height="23" viewBox="0 0 23 23"><path d="M9.5 3.5 H18.5 M4 18.5 H12.5 M14 3.5 L8.5 18.5" stroke="#333" stroke-width="2.2"/></svg>
<svg style="position:absolute;left:1830px;top:27px;" width="24" height="24" viewBox="0 0 24 24"><path d="M7.5 7.8 V21" stroke="#dba010" stroke-width="2.3" stroke-linecap="round"/><path d="M5.4 4.3 V6.6 Q7.5 8.8 9.6 6.6 V4.3" fill="none" stroke="#dba010" stroke-width="1.9" stroke-linecap="round"/><path d="M12.9 2.8 A6.6 6.6 0 1 1 2.6 12.6" fill="none" stroke="#dba010" stroke-width="2"/><path d="M15.3 15.2 L20 20.3" stroke="#d89a10" stroke-width="4.4" stroke-linecap="round"/></svg>
<svg style="position:absolute;left:1861px;top:27px;" width="25" height="25" viewBox="0 0 25 25"><defs><linearGradient id="bmg" x1="0" y1="0" x2="0" y2="1"><stop offset="0" stop-color="#26a3b6"/><stop offset="1" stop-color="#137a8c"/></linearGradient></defs><circle cx="12.1" cy="11.9" r="11.2" fill="url(#bmg)"/><path d="M7.5 7 H16.5 V18 L12 15.3 L7.5 18 Z" fill="#f4fafa"/><path d="M9.5 10.2 H14.5 M9.5 13.2 H14.5" stroke="#2a9fb0" stroke-width="1.3"/></svg>
<svg style="position:absolute;left:1892px;top:27px;" width="25" height="25" viewBox="0 0 25 25"><defs><linearGradient id="hpg" x1="0" y1="0" x2="0" y2="1"><stop offset="0" stop-color="#f7b000"/><stop offset="1" stop-color="#d98200"/></linearGradient></defs><circle cx="11.9" cy="11.9" r="11.2" fill="url(#hpg)"/><path d="M8.7 9.2 C8.7 5.3 15.3 5.3 15.3 9.2 C15.3 12 12 12 12 14.8" fill="none" stroke="#fff" stroke-width="2.4"/><circle cx="12" cy="18.2" r="1.5" fill="#fff"/></svg>
<div style="left:1868px;top:59px;width:16px;height:739px;background:#dce0e7;"></div>
<div style="left:1868px;top:426px;width:16px;height:349px;background:#fafafa;border:1px solid #7e7e7e;border-radius:8px;"></div>
<div style="left:1868px;top:59px;width:16px;height:16px;background:#dde1e7;border-top:1px solid #fff;border-left:1px solid #fff;border-right:2px solid #6e6e6e;border-bottom:2px solid #6e6e6e;"></div>
<svg style="position:absolute;left:1871px;top:64px;" width="9" height="5" viewBox="0 0 9 5"><path d="M0.5 4.5 H8.5 L4.5 0.5 Z" fill="#000"/></svg>
<div style="left:1868px;top:782px;width:16px;height:16px;background:#dde1e7;border-top:1px solid #fff;border-left:1px solid #fff;border-right:2px solid #6e6e6e;border-bottom:2px solid #6e6e6e;"></div>
<svg style="position:absolute;left:1871px;top:787px;" width="9" height="5" viewBox="0 0 9 5"><path d="M0.5 0.5 H8.5 L4.5 4.5 Z" fill="#000"/></svg>
<div style="left:363px;top:802px;width:1497px;height:16px;background:#dce0e7;"></div>
<div style="left:410px;top:802px;width:671px;height:16px;background:#fafafa;border:1px solid #7e7e7e;border-radius:8px;"></div>
<div style="left:363px;top:802px;width:16px;height:16px;background:#dde1e7;border-top:1px solid #fff;border-left:1px solid #fff;border-right:2px solid #6e6e6e;border-bottom:2px solid #6e6e6e;"></div>
<svg style="position:absolute;left:368px;top:805px;" width="5" height="9" viewBox="0 0 5 9"><path d="M4.5 0.5 V8.5 L0.5 4.5 Z" fill="#000"/></svg>
<div style="left:1843px;top:802px;width:16px;height:16px;background:#dde1e7;border-top:1px solid #fff;border-left:1px solid #fff;border-right:2px solid #6e6e6e;border-bottom:2px solid #6e6e6e;"></div>
<svg style="position:absolute;left:1848px;top:805px;" width="5" height="9" viewBox="0 0 5 9"><path d="M0.5 0.5 V8.5 L4.5 4.5 Z" fill="#000"/></svg>
<div style="left:1865px;top:868px;width:16px;height:112px;background:#dce0e7;"></div>
<div style="left:1865px;top:959px;width:16px;height:1px;background:#8a8a8a;"></div>
<div style="left:1865px;top:868px;width:16px;height:16px;background:#dde1e7;border-top:1px solid #fff;border-left:1px solid #fff;border-right:2px solid #6e6e6e;border-bottom:2px solid #6e6e6e;"></div>
<svg style="position:absolute;left:1868px;top:873px;" width="9" height="5" viewBox="0 0 9 5"><path d="M0.5 4.5 H8.5 L4.5 0.5 Z" fill="#000"/></svg>
<div style="left:1865px;top:964px;width:16px;height:16px;background:#dde1e7;border-top:1px solid #fff;border-left:1px solid #fff;border-right:2px solid #6e6e6e;border-bottom:2px solid #6e6e6e;"></div>
<svg style="position:absolute;left:1868px;top:969px;" width="9" height="5" viewBox="0 0 9 5"><path d="M0.5 0.5 H8.5 L4.5 4.5 Z" fill="#000"/></svg>
<svg style="position:absolute;left:1766px;top:756px;" width="84" height="24" viewBox="0 0 84 24"><g transform="translate(2 2)"><path d="M0 0 H14 Q19 0 19 5 V15 H13.5 V5 H0 Z" fill="#f08030"/><path d="M0 7.5 H5.5 V14.5 H13.5 V15 H19 L15.5 19.5 H0 Z" fill="#1aa0d8"/><path d="M21 0 H36.5 V5 H31.5 V19.5 H26 V5 H21 Z" fill="#1aa0d8"/><path d="M44.5 0 H50.5 L59 19.5 H53 L47.5 6.5 L42 19.5 H36 Z" fill="#1aa0d8"/><path d="M46 12 L49 19.5 H43 Z" fill="#f08030"/><path d="M60 0 H79 V5 H65.5 V7.5 H79 V19.5 H60 V14.5 H73.5 V12 H60 Z" fill="#1aa0d8"/><rect x="76" y="0" width="3" height="5" fill="#f08030"/></g></svg>
</body></html>
